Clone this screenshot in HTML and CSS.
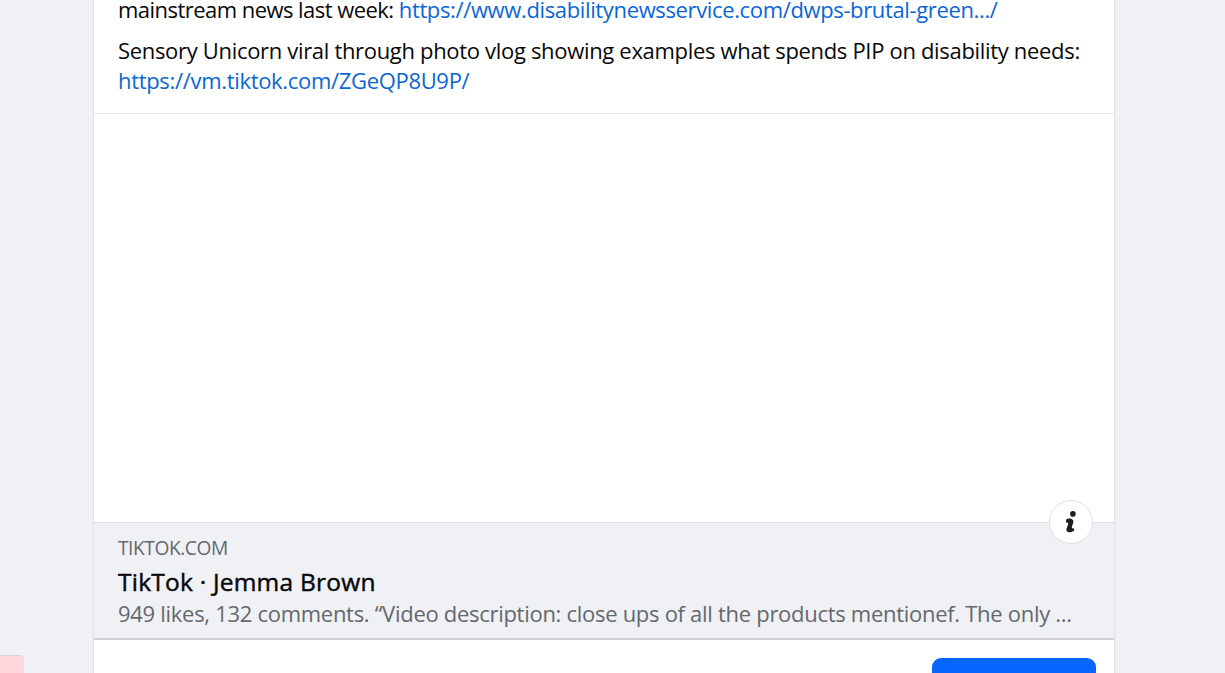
FILE: index.html
```
<!DOCTYPE html>
<html lang="en">
<head>
    <meta charset="UTF-8">
    <meta name="viewport" content="width=device-width, initial-scale=1.0">
    <title>Post</title>
    <link rel="stylesheet" href="styles.css">
</head>
<body>
    <div class="page">
        <div class="side">
            <div class="side-box"></div>
        </div>

        <div class="post">
            <div class="post-text">
                <p><span class="line-news">mainstream news last week: </span><a class="link-news" href="#">https://www.disabilitynewsservice.com/dwps-brutal-green.../</a></p>
                <p>Sensory Unicorn viral through photo vlog showing examples what spends PIP on disability needs:<br><a href="#">https://vm.tiktok.com/ZGeQP8U9P/</a></p>
            </div>

            <div class="preview-media"></div>

            <div class="preview-info">
                <button class="info-btn" aria-label="Information">
                    <svg width="18" height="24" viewBox="0 0 18 24" fill="#1c1e21">
                        <circle cx="10.9" cy="3.9" r="2.8"/>
                        <path d="M4.2 9.4C5.8 8.4 8 8.3 9.6 9C11.4 9.8 11.8 11.3 11.1 13.2L10 16.2C9.4 17.9 10.2 18.9 12.1 18.2L12.2 20.2C10.7 22 8 22.7 6 22C4.2 21.3 4.1 19.8 4.8 18L6 14.8C6.6 13 6 12.2 4 12.6Z"/>
                    </svg>
                </button>
                <div class="domain">TIKTOK.COM</div>
                <div class="title">TikTok · Jemma Brown</div>
                <div class="desc">949 likes, 132 comments. “Video description: close ups of all the products mentionef. The only ...</div>
            </div>

            <div class="post-footer">
                <button class="action-btn" aria-label="Action"></button>
            </div>
        </div>
    </div>
</body>
</html>
```
FILE: styles.css
```
* {
    margin: 0;
    padding: 0;
    box-sizing: border-box;
}

body {
    font-family: 'Segoe UI', 'Open Sans', 'Noto Sans', sans-serif;
    background: #f0f1f5;
    overflow: hidden;
}

.page {
    display: flex;
    height: 673px;
    overflow: hidden;
}

.side {
    width: 94px;
    display: flex;
    align-items: flex-end;
}

.side-box {
    width: 24px;
    height: 18px;
    background: #ffd7dc;
    border-top: 1px solid #d5d5d9;
    border-top-right-radius: 5px;
}

.post {
    width: 1020px;
    background: #fff;
    box-shadow: 0 1px 2px rgba(0, 0, 0, 0.2);
}

.post-text {
    height: 114px;
    padding: 0 24px 18px;
    border-bottom: 1px solid #e2e3e5;
    display: flex;
    flex-direction: column;
    justify-content: flex-end;
    gap: 11px;
    font-size: 22px;
    line-height: 30px;
    letter-spacing: -0.32px;
    color: #080809;
    white-space: nowrap;
}

.post-text a {
    color: #0b66d3;
    text-decoration: none;
}

.post-text .line-news {
    letter-spacing: -0.54px;
}

.post-text .link-news {
    letter-spacing: -0.36px;
}

.preview-media {
    height: 408px;
    background: #fff;
}

.preview-info {
    position: relative;
    height: 118px;
    padding: 10px 24px 0;
    background: #f0f1f5;
    border-top: 1px solid #e0e1e4;
    border-bottom: 2px solid #ced0d4;
    white-space: nowrap;
}

.info-btn {
    position: absolute;
    top: -23px;
    right: 21px;
    width: 44px;
    height: 44px;
    display: flex;
    align-items: center;
    justify-content: center;
    background: #fff;
    border: 1px solid #dfe0e3;
    border-radius: 50%;
}

.domain {
    font-size: 19.2px;
    line-height: 30px;
    letter-spacing: -0.45px;
    color: #65686c;
}

.title {
    font-size: 24.5px;
    line-height: 37px;
    letter-spacing: 0.23px;
    -webkit-text-stroke: 0.45px #080809;
    color: #080809;
}

.desc {
    font-size: 22px;
    line-height: 26px;
    letter-spacing: -0.29px;
    color: #65686c;
}

.post-footer {
    display: flex;
    justify-content: flex-end;
    padding: 18px 18px 0;
}

.action-btn {
    width: 164px;
    height: 54px;
    background: #0866ff;
    border: none;
    border-radius: 9px;
}
```
